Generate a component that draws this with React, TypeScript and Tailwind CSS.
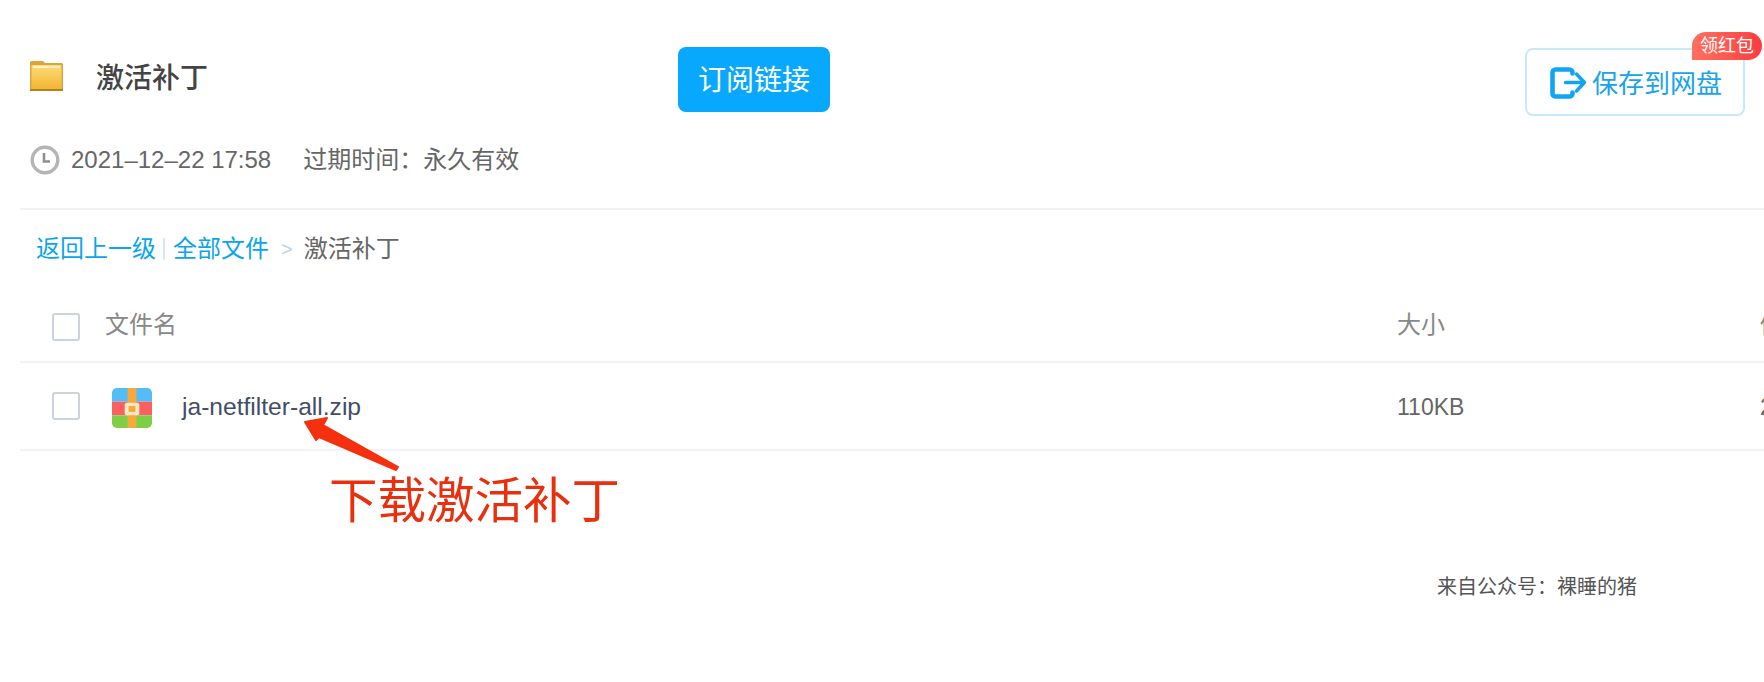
import type { ReactNode } from "react";

function FolderIcon() {
  return (
    <svg width="33" height="30" viewBox="0 0 33 30" className="shrink-0">
      <defs>
        <linearGradient id="folderFill" x1="0" y1="0" x2="0" y2="1">
          <stop offset="0" stopColor="#fbdc78" />
          <stop offset="1" stopColor="#f2b632" />
        </linearGradient>
      </defs>
      <path d="M0 1.5A1.5 1.5 0 0 1 1.5 0H13l2 2h16.5A1.5 1.5 0 0 1 33 3.5V30H0Z" fill="#d9a53c" />
      <rect x="1.5" y="4" width="30" height="24" fill="url(#folderFill)" />
      <rect x="3" y="5" width="27" height="2" fill="#fdf0c0" />
      <rect x="0" y="28" width="33" height="2" fill="#b5801f" />
    </svg>
  );
}

function ClockIcon() {
  return (
    <svg width="30" height="30" viewBox="0 0 30 30" className="shrink-0">
      <circle cx="15" cy="15" r="12.8" fill="#fff" stroke="#b5b5b5" strokeWidth="3.4" />
      <path d="M14 8v8.5h6" fill="none" stroke="#8f8f8f" strokeWidth="2.6" />
    </svg>
  );
}

function SaveIcon() {
  return (
    <svg width="37" height="33" viewBox="0 0 37 33" className="ml-0.5 -mt-[3px] shrink-0">
      <path
        d="M22.5 7.5V6.5a3 3 0 0 0-3-3h-14a3 3 0 0 0-3 3v21a3 3 0 0 0 3 3h14a3 3 0 0 0 3-3V26.500"
        fill="none"
        stroke="#0fa5f5"
        strokeWidth="4.600"
        strokeLinecap="round"
      />
      <path
        d="M15.500 16.500h18M26.500 8l8 8.500-8 8.500"
        fill="none"
        stroke="#0fa5f5"
        strokeWidth="3.400"
        strokeLinecap="round"
        strokeLinejoin="round"
      />
    </svg>
  );
}

function ZipIcon() {
  return (
    <svg width="40" height="40" viewBox="0 0 41 41" className="shrink-0">
      <defs>
        <clipPath id="zipClip">
          <rect width="41" height="41" rx="5" />
        </clipPath>
      </defs>
      <g clipPath="url(#zipClip)">
        <rect width="41" height="14" fill="#53bdf7" />
        <rect y="14" width="41" height="14" fill="#fb6060" />
        <rect y="28" width="41" height="13" fill="#7fcf46" />
        <rect x="16" width="9" height="41" fill="#f7a93b" />
        <rect x="13" y="15" width="15" height="13" rx="2" fill="#fde8c4" />
        <rect x="17" y="18.500" width="7" height="6" fill="#f7a93b" />
      </g>
    </svg>
  );
}

function Checkbox({ className }: { className?: string }) {
  return <div className={`w-7 h-7 shrink-0 rounded-[3px] border-2 border-[#ccd3de] bg-white ${className ?? ""}`} />;
}

function Row({ className, children }: { className: string; children: ReactNode }) {
  return <div className={`flex items-center w-[1900px] border-b-2 border-[#f2f3f7] ${className}`}>{children}</div>;
}

export default function App() {
  return (
    <div className="relative w-[1764px] h-[682px] overflow-hidden bg-white pl-5 font-['Liberation_Sans','Noto_Sans_CJK_SC',sans-serif] text-2xl text-[#666]">
      {/* top block */}
      <div className="h-[210px] border-b-2 border-[#f1f2f4] pt-[47px]">
        <div className="flex items-start">
          <div className="flex items-start w-[658px] pl-2.5 pt-[14px]">
            <FolderIcon />
            <h1 className="ml-[33px] mt-px text-[28px] leading-[34px] font-medium text-[#444]">激活补丁</h1>
          </div>
          <button className="w-[152px] h-[65px] rounded-lg bg-[#09a8ff] pt-0.5 text-white text-[28px]">订阅链接</button>
          <div className="relative ml-[695px] mt-px flex items-center justify-center gap-[5px] pt-1 w-[220px] h-[68px] rounded-lg border-2 border-[#c6e9fb] text-[26px] text-[#19a3ea]">
            <SaveIcon />
            <span>保存到网盘</span>
            <span className="absolute -top-[18px] left-[165px] w-[70px] h-7 rounded-t-[14px] rounded-br-[14px] bg-gradient-to-r from-[#ff6f5e] to-[#ff3a40] text-center text-[18px] leading-7 text-white">领红包</span>
          </div>
        </div>
        <div className="flex items-center mt-[28px] pl-2.5">
          <ClockIcon />
          <span className="ml-[11px]">2021–12–22 17:58</span>
          <span className="ml-8">过期时间：永久有效</span>
        </div>
      </div>

      {/* breadcrumb */}
      <div className="flex items-center h-[77px] pl-4 text-[#0ba5ec]">
        <span>返回上一级</span>
        <span className="ml-[7px] mr-2 w-0.5 h-[22px] bg-[#d5e8f5]" />
        <span>全部文件</span>
        <span className="ml-3 text-[#c3d3e6] text-xl">&gt;</span>
        <span className="ml-[11px] text-[#666]">激活补丁</span>
      </div>

      {/* file table */}
      <Row className="h-[76px] pt-0.5">
        <div className="flex items-center shrink-0 w-[1377px] pl-8">
          <Checkbox className="mt-1" />
          <span className="ml-[25px] text-[#888]">文件名</span>
        </div>
        <span className="shrink-0 w-[363px] text-[#888]">大小</span>
        <span className="shrink-0 text-[#888]">修改时间</span>
      </Row>
      <Row className="h-[88px] pt-0.5">
        <div className="flex items-center shrink-0 w-[1377px] pl-8">
          <Checkbox className="-mt-0.5" />
          <div className="ml-8 mt-0.5"><ZipIcon /></div>
          <span className="ml-[30px] text-[24.6px] text-[#424e67]">ja-netfilter-all.zip</span>
        </div>
        <span className="shrink-0 w-[363px] text-[23px]">110KB</span>
        <span className="shrink-0">2021-12-22</span>
      </Row>

      {/* red annotation over the file row */}
      <svg width="110" height="60" viewBox="0 0 110 60" className="absolute left-[300px] top-[414px]">
        <path d="M5 8 L27 4 L23 11 L98 53 L96 56 L19 23 L16 26 Z" fill="#f5300f" stroke="#f5300f" strokeWidth="2" strokeLinejoin="round" />
      </svg>
      <div className="absolute left-[329px] top-[471px] text-[48.500px] leading-[60px] text-[#e8300f]">下载激活补丁</div>

      <div className="absolute left-[1437px] top-[574px] text-[20px] leading-[26px] text-[#555]">来自公众号：裸睡的猪</div>
    </div>
  );
}
